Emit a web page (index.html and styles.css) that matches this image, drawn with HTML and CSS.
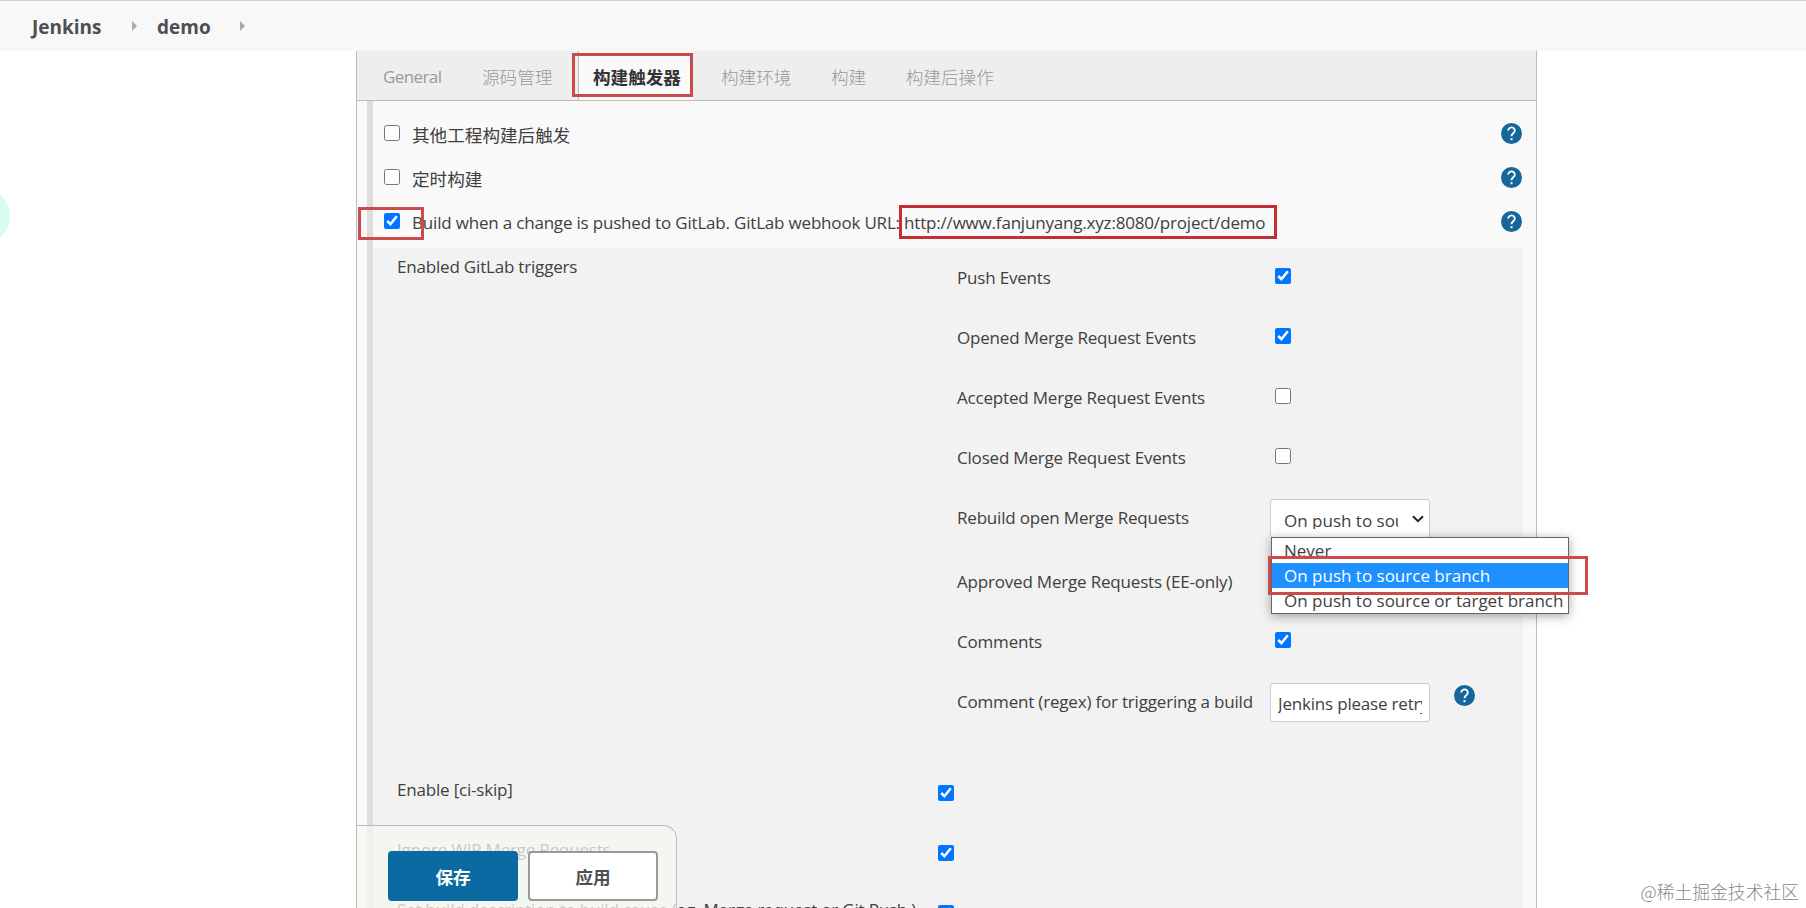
FILE: index.html
```html
<!DOCTYPE html>
<html lang="zh-CN">
<head>
    <meta charset="UTF-8">
    <meta name="viewport" content="width=device-width, initial-scale=1.0">
    <title>demo Config [Jenkins]</title>
    <link rel="stylesheet" href="styles.css">
</head>
<body>
    <svg class="defs" width="0" height="0">
        <symbol id="help" viewBox="0 0 21 21">
            <circle cx="10.5" cy="10.5" r="10.5" fill="#14669b"/>
            <path d="M7.2 7.6a3.3 3.1 0 1 1 5.4 2.3c-1.2 1-2.1 1.5-2.1 3.4" fill="none" stroke="#fff" stroke-width="1.8"/>
            <rect x="9.5" y="15.2" width="2" height="2" fill="#fff"/>
        </symbol>
    </svg>

    <!-- Breadcrumbs -->
    <header class="breadcrumbs">
        <a class="crumb crumb-root">Jenkins</a>
        <span class="arrow"></span>
        <a class="crumb crumb-job">demo</a>
        <span class="arrow"></span>
    </header>

    <div class="bubble"></div>

    <main class="config">
        <!-- Tabs -->
        <nav class="tabs">
            <a class="tab tab-general">General</a>
            <a class="tab">源码管理</a>
            <a class="tab active">构建触发器<span class="mark mark-tab"></span></a>
            <a class="tab">构建环境</a>
            <a class="tab">构建</a>
            <a class="tab">构建后操作</a>
        </nav>

        <div class="section">
            <div class="trigger">
                <input type="checkbox">
                <label>其他工程构建后触发</label>
                <svg class="help"><use href="#help"/></svg>
            </div>
            <div class="trigger">
                <input type="checkbox">
                <label>定时构建</label>
                <svg class="help"><use href="#help"/></svg>
            </div>
            <div class="trigger">
                <input type="checkbox" checked>
                <label class="en">Build when a change is pushed to GitLab. GitLab webhook URL: <span class="url">http://www.fanjunyang.xyz:8080/project/demo</span></label>
                <svg class="help"><use href="#help"/></svg>
                <span class="mark mark-check"></span>
                <span class="mark mark-url"></span>
            </div>

            <!-- GitLab settings -->
            <div class="gitlab en">
                <div class="group">
                    <div class="group-name">Enabled GitLab triggers</div>
                    <div class="events">
                        <div class="event"><label>Push Events</label><input type="checkbox" checked></div>
                        <div class="event"><label>Opened Merge Request Events</label><input type="checkbox" checked></div>
                        <div class="event"><label>Accepted Merge Request Events</label><input type="checkbox"></div>
                        <div class="event"><label>Closed Merge Request Events</label><input type="checkbox"></div>
                        <div class="event event-select">
                            <label>Rebuild open Merge Requests</label>
                            <div class="select">
                                <span class="select-value">On push to source branch</span>
                                <svg class="chevron" viewBox="0 0 12 8"><path d="M1 1.2l5 5 5-5" fill="none" stroke="#222" stroke-width="2"/></svg>
                                <ul class="options">
                                    <li>Never</li>
                                    <li class="selected">On push to source branch</li>
                                    <li>On push to source or target branch</li>
                                </ul>
                                <span class="mark mark-option"></span>
                            </div>
                        </div>
                        <div class="event event-low"><label>Approved Merge Requests (EE-only)</label></div>
                        <div class="event event-low"><label>Comments</label><input type="checkbox" checked></div>
                        <div class="event event-low">
                            <label>Comment (regex) for triggering a build</label>
                            <div class="textbox"><span>Jenkins please retry a build</span></div>
                            <svg class="help"><use href="#help"/></svg>
                        </div>
                    </div>
                </div>
                <div class="option-row"><label>Enable [ci-skip]</label><input type="checkbox" checked></div>
                <div class="option-row"><label>Ignore WIP Merge Requests</label><input type="checkbox" checked></div>
                <div class="option-row"><label>Set build description to build cause (eg. Merge request or Git Push )</label><input type="checkbox" checked></div>
            </div>
        </div>

        <!-- Sticky save bar -->
        <div class="bottom-bar">
            <button class="btn btn-primary">保存</button>
            <button class="btn">应用</button>
        </div>
    </main>

    <div class="watermark">@稀土掘金技术社区</div>
</body>
</html>
```
FILE: styles.css
```css
* {
    box-sizing: border-box;
}

body {
    margin: 0;
    height: 908px;
    overflow: hidden;
    position: relative;
    background: #fff;
    color: #404040;
    font-family: "Open Sans", "Noto Sans CJK SC", sans-serif;
    font-size: 17.6px;
    line-height: 24px;
}

.defs {
    position: absolute;
}

.en {
    font-size: 17px;
    letter-spacing: -0.19px;
}

input[type="checkbox"] {
    width: 16px;
    height: 16px;
    margin: 0;
    flex: none;
}

.help {
    width: 21px;
    height: 21px;
    flex: none;
}

/* Breadcrumbs */
.breadcrumbs {
    display: flex;
    align-items: center;
    height: 51px;
    padding-left: 32px;
    background: #f8f8f8;
    border-top: 1px solid #d3d3d3;
}

.crumb {
    font-size: 19px;
    font-weight: 700;
    color: #4d4f52;
    padding-top: 2px;
}

.crumb-root {
    width: 100px;
}

.crumb-job {
    width: 83px;
}

.arrow {
    border: 5px solid transparent;
    border-left-color: #aaa;
    border-right: 0;
    width: 5px;
    margin-right: 20px;
}

.bubble {
    position: absolute;
    left: -46px;
    top: 188px;
    width: 56px;
    height: 56px;
    border-radius: 50%;
    background: #d8fdf0;
}

/* Config panel */
.config {
    position: relative;
    width: 1181px;
    height: 857px;
    margin-left: 356px;
    background: #f9f9f9;
    border-left: 1px solid #bbb;
    border-right: 1px solid #bbb;
}

.tabs {
    display: flex;
    height: 50px;
    padding-left: 6px;
    background: #eee;
    border-bottom: 1px solid #bbb;
}

.tab {
    padding: 14px 19.6px 0 20px;
    color: #999;
    font-weight: 300;
}

.tab-general {
    width: 99px;
    font-size: 17px;
    font-weight: 400;
    letter-spacing: -0.6px;
}

.tab.active {
    position: relative;
    margin: 0 8px 0 6px;
    padding: 14px 12px 0 14px;
    border-left: 1px solid #bbb;
    background: #f9f9f9;
    color: #333;
    font-weight: 700;
}

/* Red highlight frames */
.mark {
    position: absolute;
    border: 3px solid #c94c4c;
}

.mark-tab {
    left: -7px;
    top: 2px;
    width: 121px;
    height: 44px;
}

.mark-check {
    left: -15px;
    top: 8px;
    width: 66px;
    height: 33px;
}

.mark-url {
    left: 526px;
    top: 6px;
    width: 378px;
    height: 34px;
    border-color: #c42f36;
}

.mark-option {
    left: -3px;
    top: 56px;
    width: 320px;
    height: 39px;
    z-index: 3;
}

/* Triggers */
.section {
    margin-left: 10px;
    padding-top: 10px;
    border-left: 6px solid #ddd;
    height: 807px;
}

.trigger {
    position: relative;
    display: flex;
    align-items: center;
    height: 44px;
    padding: 0 14px 0 11px;
}

.trigger label {
    flex: 1;
    padding: 3px 0 0 12px;
}

.gitlab {
    height: 661px;
    margin: 5px 13px 0 0;
    background: #f2f2f2;
}

.group {
    display: flex;
    height: 517px;
    padding-left: 24px;
}

.group-name {
    width: 560px;
    padding-top: 7px;
}

.event {
    display: flex;
    height: 60px;
}

.event label {
    width: 313px;
    padding-top: 18px;
    white-space: nowrap;
}

.event input {
    margin: 20px 0 0 5px;
}

.event-select {
    height: 63px;
}

.event-low label {
    padding-top: 19px;
}

.event-low input {
    margin-top: 21px;
}

.select {
    position: relative;
    width: 160px;
    height: 39px;
    margin-top: 11px;
    background: #fff;
    border: 1px solid #ccc;
    border-radius: 3px;
    letter-spacing: 0;
}

.select-value {
    display: block;
    width: 114px;
    height: 22px;
    margin: 7px 0 0 13px;
    line-height: 27px;
    overflow: hidden;
    white-space: nowrap;
}

.chevron {
    position: absolute;
    right: 5px;
    top: 15px;
    width: 12px;
    height: 8px;
}

.options {
    position: absolute;
    z-index: 2;
    left: 0;
    top: 37px;
    width: 298px;
    margin: 0;
    padding: 0;
    list-style: none;
    background: #fff;
    border: 1px solid #666;
    box-shadow: 0 2px 10px rgba(0, 0, 0, 0.35);
}

.options li {
    height: 25px;
    padding-left: 12px;
    line-height: 26px;
    white-space: nowrap;
}

.options .selected {
    background: #1e90ff;
    color: #fff;
}

.textbox {
    width: 160px;
    height: 39px;
    margin-top: 12px;
    padding: 8px 7px;
    background: #fff;
    border: 1px solid #ccc;
    border-radius: 3px;
}

.textbox span {
    display: block;
    overflow: hidden;
    white-space: nowrap;
}

.event .help {
    margin: 14px 0 0 24px;
}

.option-row {
    display: flex;
    height: 60px;
    padding-left: 24px;
}

.option-row label {
    width: 541px;
    padding-top: 13px;
}

.option-row input {
    margin-top: 20px;
}

/* Bottom bar */
.bottom-bar {
    position: absolute;
    left: 0;
    bottom: 0;
    display: flex;
    gap: 10px;
    width: 320px;
    height: 83px;
    padding: 25px 0 0 31px;
    background: rgba(244, 248, 240, 0.75);
    border: 1px solid #bbb;
    border-left: 0;
    border-bottom: 0;
    border-top-right-radius: 14px;
}

.btn {
    width: 130px;
    height: 50px;
    border: 2px solid #999;
    border-radius: 4px;
    background: #fff;
    color: #4d4f52;
    font-family: inherit;
    font-size: 17.6px;
    font-weight: 700;
}

.btn-primary {
    background: #0b6aa2;
    border-color: #0b6aa2;
    color: #fff;
}

.watermark {
    position: absolute;
    right: 7px;
    bottom: 5px;
    color: #888;
    font-family: "Noto Sans CJK SC", sans-serif;
    font-size: 17.8px;
    font-weight: 300;
}
```
